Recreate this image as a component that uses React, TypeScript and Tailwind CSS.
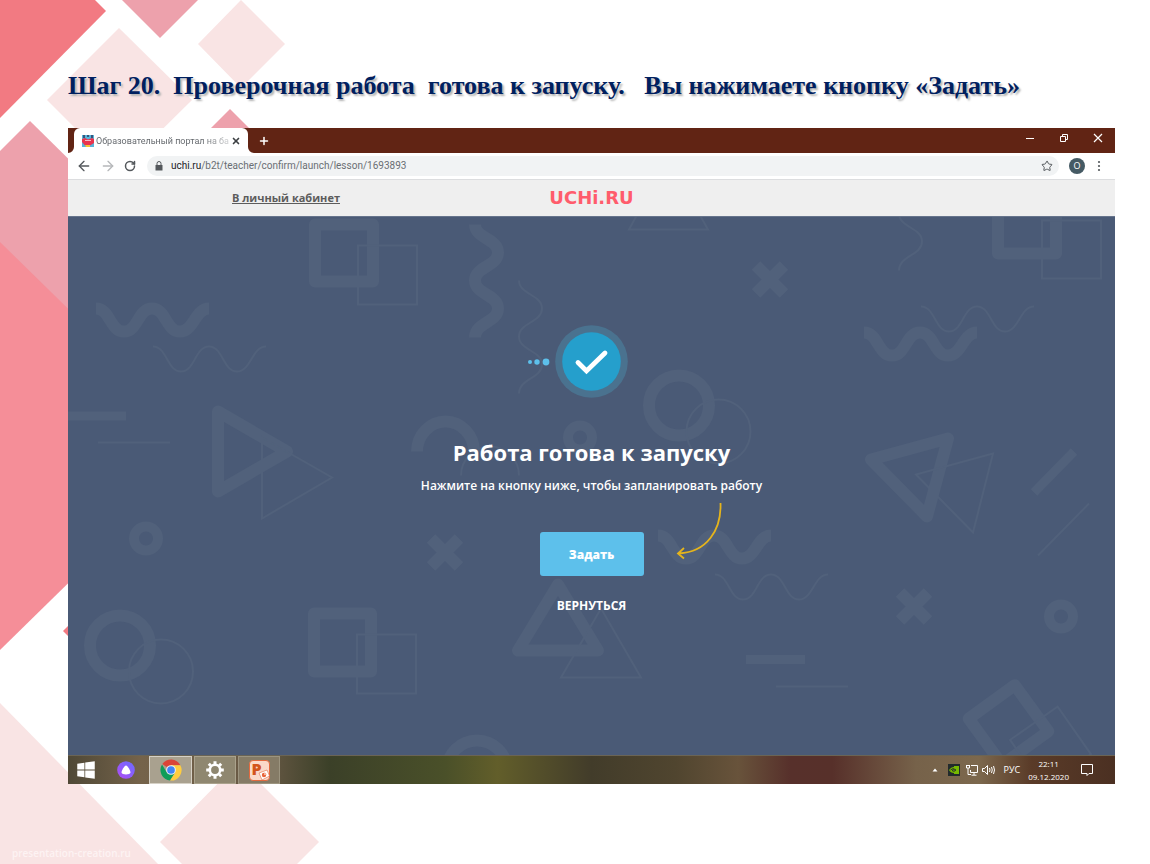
import { ReactNode } from "react";
import { FaWindows } from "react-icons/fa";
import { ArrowLeft, ArrowRight, Plus, RotateCw, Star, X } from "lucide-react";

interface TaskButtonProps {
  label: string;
  className: string;
  children: ReactNode;
}

const THICK_WAVE = "c14 0 14 23 28 23s14 -23 28 -23s14 23 28 23s15 -23 29 -23";
const THIN_WAVE = "c14 0 14 25 28 25s14 -25 28 -25s14 25 28 25s15 -25 29 -25";
const DOWN_WAVE = "c0 14 23 14 23 28s-23 14 -23 28s23 14 23 28s-23 14 -23 29";

const SlideDecor = () => (
  <svg className="absolute left-0 top-0 h-[864px] w-80" viewBox="0 0 320 864" aria-hidden="true">
    <path fill="#f27a82" d="M0 0H95L106 11L0 118Z" />
    <path fill="#eda1ac" d="M122 0H198L160 38Z" />
    <path fill="#f9e4e4" d="M119 28L192 100L119 172L47 100Z" />
    <path fill="#f9e4e4" d="M241 0L285 44L241 88L198 44Z" />
    <path fill="#eda1ac" d="M230 109L260 139H200Z" />
    <path fill="#eda1ac" d="M30 121L100 190V340H0V151Z" />
    <path fill="#f58e98" d="M0 242L100 340V552L0 650Z" />
    <path fill="#f27a82" d="M63 631L80 614V648Z" />
    <path fill="#f9e4e4" d="M0 703L158 864H0Z" />
    <path fill="#f9e4e4" d="M239 762L319 842L297 864H182L160 842Z" />
  </svg>
);

const Cross = ({ x, y }: { x: number; y: number }) => (
  <path d={`M${x - 14} ${y - 14}l28 28m0 -28l-28 28`} strokeWidth="12" />
);

const Pattern = () => (
  <svg
    className="absolute inset-0 h-full w-full"
    viewBox="68 216 1047 539"
    preserveAspectRatio="xMidYMid slice"
    fill="none"
    stroke="#51617b"
    aria-hidden="true"
  >
    <g strokeWidth="12" strokeLinejoin="round">
      <rect x="315" y="224" width="58" height="57" />
      <rect x="998" y="196" width="58" height="57" />
      <rect x="314" y="613" width="57" height="58" />
      <rect x="980" y="696" width="57" height="57" transform="rotate(-36 1008.5 724.5)" />
      <path d="M218 411L287 451L218 491Z" />
      <path d="M948 438L871 459L927 516Z" />
      <path d="M558 584L518 650H598Z" />
      <path d={"M475 224" + DOWN_WAVE} />
      <path d={"M96 308" + THICK_WAVE} />
      <path d={"M864 332" + THICK_WAVE} />
      <path d={"M658 535" + THICK_WAVE} />
      <path d="M417 451a28.5 30 0 0 1 57 0" />
      <circle cx="679" cy="405" r="30" />
      <circle cx="120" cy="645" r="30" />
      <circle cx="477" cy="770" r="30" />
    </g>
    <g strokeWidth="10">
      <circle cx="580" cy="437" r="12" />
      <circle cx="146" cy="538" r="12" />
      <circle cx="1061" cy="616" r="12" />
    </g>
    <g strokeWidth="9">
      <path d="M68 415.500H126" />
      <path d="M746 659H805" />
      <path d="M1074 451L1034 492" />
    </g>
    <Cross x={770} y={279} />
    <Cross x={445} y={552} />
    <Cross x={914} y={606} />
    <g strokeWidth="2">
      <rect x="358" y="245" width="59" height="59" />
      <rect x="1042" y="220" width="59" height="58" />
      <rect x="357" y="634" width="59" height="59" />
      <rect x="1021.500" y="717.500" width="58" height="58" transform="rotate(-35 1050.5 746.5)" />
      <path d="M262 437L332 477L262 518Z" />
      <path d="M993 453L916 474L973 532Z" />
      <path d="M601 608L561 677H641Z" />
      <path d="M668 158L629 229H708Z" />
      <path d={"M519 280" + DOWN_WAVE} />
      <path d={"M899 157" + DOWN_WAVE} />
      <path d={"M153 346" + THIN_WAVE} />
      <path d={"M921 306" + THIN_WAVE} />
      <path d={"M715 574" + THIN_WAVE} />
      <path d="M461 475a29 29 0 0 1 58 0" />
      <circle cx="718.500" cy="431" r="32" />
      <circle cx="161" cy="671" r="32" />
      <path d="M98 442H170M776 686H848M1089 503L1038 555" />
    </g>
  </svg>
);

const TabStrip = () => (
  <div className="flex h-[25px] justify-between bg-[#612414]">
    <div className="flex items-end">
      <svg className="h-1.5 w-1.5" viewBox="0 0 6 6" fill="#fff" aria-hidden="true">
        <path d="M6 0V6H0A6 6 0 0 0 6 0Z" />
      </svg>
      <div className="flex h-[25px] w-[174px] items-center justify-between rounded-t-md bg-white pl-2 pr-[7px]">
        <svg className="h-3 w-3 shrink-0" viewBox="0 0 12 12" aria-hidden="true">
          <path fill="#58b4d9" d="M0 0h12v12H0z" />
          <path fill="#35567d" d="M1 0h2v3H1zM5 0h2v2H5zM9 0h2v3H9z" />
          <path fill="#e8344e" d="M0 4l3 -1 3 1.500 4 -1.500 2 1v4l-4 2.500H3L0 7z" />
          <path fill="#f5b9c1" d="M3 5h6v1H3z" />
          <path fill="#f5c431" d="M3 10h5v2H4z" />
        </svg>
        <span className="whitespace-nowrap bg-linear-to-r from-[#5f6368] from-80% to-[#5f6368]/30 bg-clip-text font-[Roboto,sans-serif] text-[9px] leading-4 text-transparent">
          Образовательный портал на ба
        </span>
        <button type="button" aria-label="Закрыть вкладку">
          <X className="h-2.5 w-2.5 text-[#3c4043]" strokeWidth={4} />
        </button>
      </div>
      <svg className="h-1.5 w-1.5" viewBox="0 0 6 6" fill="#fff" aria-hidden="true">
        <path d="M0 0V6H6A6 6 0 0 1 0 0Z" />
      </svg>
      <button type="button" aria-label="Новая вкладка" className="flex h-[25px] w-5 items-center justify-center text-white">
        <Plus className="h-3 w-3" strokeWidth={3} />
      </button>
    </div>
    <div className="flex h-5 items-center gap-6 pr-3 text-white">
      <button type="button" aria-label="Свернуть">
        <svg className="h-2.5 w-2.5" viewBox="0 0 10 10" stroke="currentColor" fill="none">
          <path d="M1 5.500H9" />
        </svg>
      </button>
      <button type="button" aria-label="Свернуть в окно">
        <svg className="h-2.5 w-2.5" viewBox="0 0 10 10" stroke="currentColor" fill="none">
          <path d="M1.500 3.500H6.500V8.500H1.500ZM3.500 3V1.500H8.500V6.500H7" />
        </svg>
      </button>
      <button type="button" aria-label="Закрыть">
        <svg className="h-2.5 w-2.5" viewBox="0 0 10 10" stroke="currentColor" fill="none">
          <path d="M1 1L9 9M9 1L1 9" strokeWidth="1.200" />
        </svg>
      </button>
    </div>
  </div>
);

const AddressBar = () => (
  <div className="flex h-[27px] items-center border-b border-[#dcdddf] bg-white pl-2 pr-2.5">
    <div className="flex w-[71px] shrink-0 items-center gap-2 text-[#54585c]">
      <button type="button" aria-label="Назад">
        <ArrowLeft className="h-4 w-4" />
      </button>
      <button type="button" aria-label="Вперёд" className="text-[#b6b8ba]">
        <ArrowRight className="h-4 w-4" />
      </button>
      <button type="button" aria-label="Обновить">
        <RotateCw className="h-3 w-3" strokeWidth={3} />
      </button>
    </div>
    <div className="flex h-5 grow items-center rounded-full bg-[#f1f3f4] pl-2 pr-1.5 font-[Roboto,sans-serif] text-[10px] leading-4">
      <svg className="mr-2 h-2.5 w-2" viewBox="0 0 8 10" fill="#54585c" aria-hidden="true">
        <path d="M0.500 4h7v5.500h-7z" />
        <path d="M2 4V2.500a2 2 0 0 1 4 0V4" fill="none" stroke="#54585c" />
      </svg>
      <label htmlFor="address" className="text-[#202124]">uchi.ru</label>
      <input
        id="address"
        type="text"
        defaultValue="/b2t/teacher/confirm/launch/lesson/1693893"
        className="min-w-0 grow bg-transparent text-[#6a6e73] outline-none"
      />
      <button type="button" aria-label="Добавить в закладки">
        <Star className="h-3 w-3 text-[#54585c]" />
      </button>
    </div>
    <button type="button" className="ml-2.5 h-4 w-4 rounded-full bg-[#455a64] text-[9px] leading-4 text-white">
      О
    </button>
    <button type="button" aria-label="Меню" className="ml-2">
      <svg className="h-3 w-3" viewBox="0 0 12 12" fill="#54585c">
        <circle cx="6" cy="2" r="1.100" />
        <circle cx="6" cy="6" r="1.100" />
        <circle cx="6" cy="10" r="1.100" />
      </svg>
    </button>
  </div>
);

const SiteHeader = () => (
  <header className="grid h-9 grid-cols-3 items-center bg-[#efefef]">
    <a href="#cabinet" className="ml-[164px] whitespace-nowrap text-[11px] font-bold leading-4 text-[#5c5c5c] underline">
      В личный кабинет
    </a>
    <a href="#home" className="text-center font-['DejaVu_Sans',sans-serif] text-lg font-bold leading-5 text-[#ff5c6c]">
      UCHi.RU
    </a>
  </header>
);

const Launch = () => (
  <main className="relative border-t border-[#66748c] bg-[#4a5a76]">
    <Pattern />
    <div className="relative flex flex-col items-center pb-[139px] pt-[107px] text-white">
      <svg className="h-[76px] w-32" viewBox="0 0 128 76" aria-hidden="true">
        <circle cx="2" cy="38" r="2" fill="#5dc0eb" />
        <circle cx="9" cy="38" r="2.700" fill="#5dc0eb" />
        <circle cx="18" cy="38" r="3.400" fill="#5dc0eb" />
        <circle cx="63.500" cy="37.500" r="36.300" fill="#4a728f" />
        <circle cx="63.500" cy="37.500" r="29.300" fill="#259fcc" />
        <path d="M50 38.500L58.500 47L77 29" fill="none" stroke="#fff" strokeWidth="4.800" strokeLinecap="round" />
      </svg>
      <h2 className="mt-9 text-[22px] font-bold leading-8">Работа готова к запуску</h2>
      <p className="mt-2 text-xs font-semibold leading-5">Нажмите на кнопку ниже, чтобы запланировать работу</p>
      <div className="relative mt-9">
        <button type="button" className="block h-11 w-[104px] rounded-[3px] bg-[#5dc0eb] pt-0.5 text-xs font-extrabold">
          Задать
        </button>
        <svg
          className="absolute -top-8 left-[134px] h-[60px] w-12"
          viewBox="0 0 48 60"
          fill="none"
          stroke="#e5b41c"
          strokeWidth="1.800"
          aria-hidden="true"
        >
          <path d="M46.500 3C47.500 30 33 52 5 53.500M10 48L4 53.500L10 58.500" />
        </svg>
      </div>
      <a href="#back" className="mt-5 text-xs font-bold leading-5">ВЕРНУТЬСЯ</a>
    </div>
  </main>
);

const TaskButton = ({ label, className, children }: TaskButtonProps) => (
  <button type="button" aria-label={label} className={`flex h-full items-center justify-center ${className}`}>
    {children}
  </button>
);

const Taskbar = () => (
  <footer className="flex h-[29px] justify-between border-t border-[#6a6455] bg-[linear-gradient(90deg,#4f4836_0%,#75634a_7%,#665844_19%,#3b4028_25%,#4a5029_36%,#625e2a_41%,#423c2a_50%,#50452f_58%,#68533b_64%,#57302b_69%,#57302a_73%,#76624a_81%,#7c684d_87%,#5a3b28_92%,#4b3022_100%)]">
    <div className="flex gap-0.5">
      <TaskButton label="Пуск" className="w-[35px]">
        <FaWindows className="h-5 w-5 text-white" />
      </TaskButton>
      <TaskButton label="Алиса" className="w-[42px]">
        <svg className="h-[18px] w-[18px]" viewBox="0 0 18 18">
          <defs>
            <linearGradient id="alice" x1="1" y1="0" x2="0" y2="1">
              <stop stopColor="#6a6cff" />
              <stop offset="1" stopColor="#b04cf5" />
            </linearGradient>
          </defs>
          <circle cx="9" cy="9" r="8.800" fill="url(#alice)" />
          <path d="M9 4.500C10.500 4.500 13.500 9.500 13.500 11.500C13.500 14 4.500 14 4.500 11.500C4.500 9.500 7.500 4.500 9 4.500Z" fill="#fff" />
        </svg>
      </TaskButton>
      <TaskButton label="Google Chrome" className="w-[43px] border border-[#d6d1c6] bg-[#a9a18f]">
        <svg className="h-[22px] w-[22px]" viewBox="0 0 24 24">
          <path fill="#db4437" d="M12 12L2.500 5.500A11.500 11.500 0 0 1 22.200 6.700H12Z" />
          <path fill="#0f9d58" d="M2.200 6A11.500 11.500 0 0 0 11 23.500L16.600 14.600L12 12L7.400 14.600Z" />
          <path fill="#ffcd40" d="M22.200 6.700A11.500 11.500 0 0 1 11 23.500L16.600 14.600L12 6.700Z" />
          <circle cx="12" cy="12" r="5.300" fill="#f1f1f1" />
          <circle cx="12" cy="12" r="4.200" fill="#4285f4" />
        </svg>
      </TaskButton>
      <TaskButton label="Параметры" className="w-[42px] border border-[#aaa28c] bg-[#8f8770]">
        <svg className="h-5 w-5" viewBox="0 0 20 20" fill="none" stroke="#fff">
          <circle cx="10" cy="10" r="5.200" strokeWidth="2.600" />
          <path
            d="M10 1.200V4M10 16V18.800M1.200 10H4M16 10H18.800M3.800 3.800L5.800 5.800M14.200 14.200L16.200 16.200M3.800 16.200L5.800 14.200M14.200 5.800L16.200 3.800"
            strokeWidth="3"
          />
        </svg>
      </TaskButton>
      <TaskButton label="PowerPoint" className="w-[42px] border border-[#9c947f] bg-[#857b66]">
        <span className="relative flex h-[21px] w-[21px] rounded-sm border border-[#e26a3f] bg-[#fbd9c9] pl-0.5 text-base font-extrabold leading-4 text-[#d3541b]">
          P
          <svg className="absolute -bottom-px -right-px h-3 w-3" viewBox="0 0 12 12" aria-hidden="true">
            <path fill="#fff" stroke="#e26a3f" strokeWidth="0.600" d="M1 4L9 1L11.500 7L4 11Z" />
            <circle cx="6" cy="6" r="2.200" fill="#e8633a" />
            <path d="M6 6V3.500A2.500 2.500 0 0 1 8.500 6Z" fill="#f7b49a" />
          </svg>
        </span>
      </TaskButton>
    </div>
    <div className="flex items-center pr-[22px] text-white">
      <svg className="h-1 w-1.5" viewBox="0 0 6 4" fill="#fff" aria-hidden="true">
        <path d="M3 0.500L5.500 3.500H0.500Z" />
      </svg>
      <svg className="ml-2.5 h-3 w-3" viewBox="0 0 12 12" aria-hidden="true">
        <path fill="#222b2c" d="M0 0h12v12H0z" />
        <path fill="#76b900" d="M1 6Q3.500 2.500 6 3V2h5v8H6V9Q2.500 9 1 6Z" />
        <path fill="none" stroke="#222b2c" strokeWidth="0.900" d="M2.500 6Q5 3 8 6Q6 8.500 4 6.500Q5.500 5 6.500 6" />
      </svg>
      <svg className="ml-1.5 h-3 w-3" viewBox="0 0 12 12" fill="none" stroke="#fff" aria-hidden="true">
        <path d="M5 1.500H11.500V8.500H4.500V6M8 8.500V11M5.500 11.200H10.500M0.500 1V4H3.500V1M2 4V10.500H5M1 1.500H3" />
      </svg>
      <svg className="ml-1 h-3 w-3.5" viewBox="0 0 14 12" fill="none" stroke="#fff" aria-hidden="true">
        <path d="M0.500 4.500H2.500L5.500 1.500V10.500L2.500 7.500H0.500ZM7.500 4Q8.500 6 7.500 8M9.500 3Q11 6 9.500 9M11.500 2Q13.500 6 11.500 10" />
      </svg>
      <span className="ml-2 text-[9px] leading-4">РУС</span>
      <time dateTime="2020-12-09T22:11" className="ml-2 flex flex-col items-center text-[8px] leading-[13px]">
        <span>22:11</span>
        <span>09.12.2020</span>
      </time>
      <svg className="ml-3 h-3 w-3" viewBox="0 0 12 12" fill="none" stroke="#fff" aria-hidden="true">
        <path d="M0.500 0.500H11.500V9.500H8L6 11.500V9.500H0.500Z" />
      </svg>
    </div>
  </footer>
);

const App = () => {
  return (
    <div className="relative min-h-screen overflow-hidden bg-white font-['Open_Sans','Noto_Sans',sans-serif]">
      <SlideDecor />
      <div className="relative pb-20 pl-[68px] pr-[35px] pt-[70px]">
        <h1 className="mb-[26px] whitespace-pre font-['Liberation_Serif',serif] text-[26px] font-bold leading-8 text-[#00205f] [text-shadow:2px_2px_2px_#b4b4b4]">
          {"Шаг 20.  Проверочная работа  готова к запуску.   Вы нажимаете кнопку «Задать»"}
        </h1>
        <TabStrip />
        <AddressBar />
        <SiteHeader />
        <Launch />
        <Taskbar />
      </div>
      <p className="absolute left-3 top-[845px] text-[10px] font-semibold leading-4 text-[#fdf3f3]">presentation-creation.ru</p>
    </div>
  );
};

export default App;
